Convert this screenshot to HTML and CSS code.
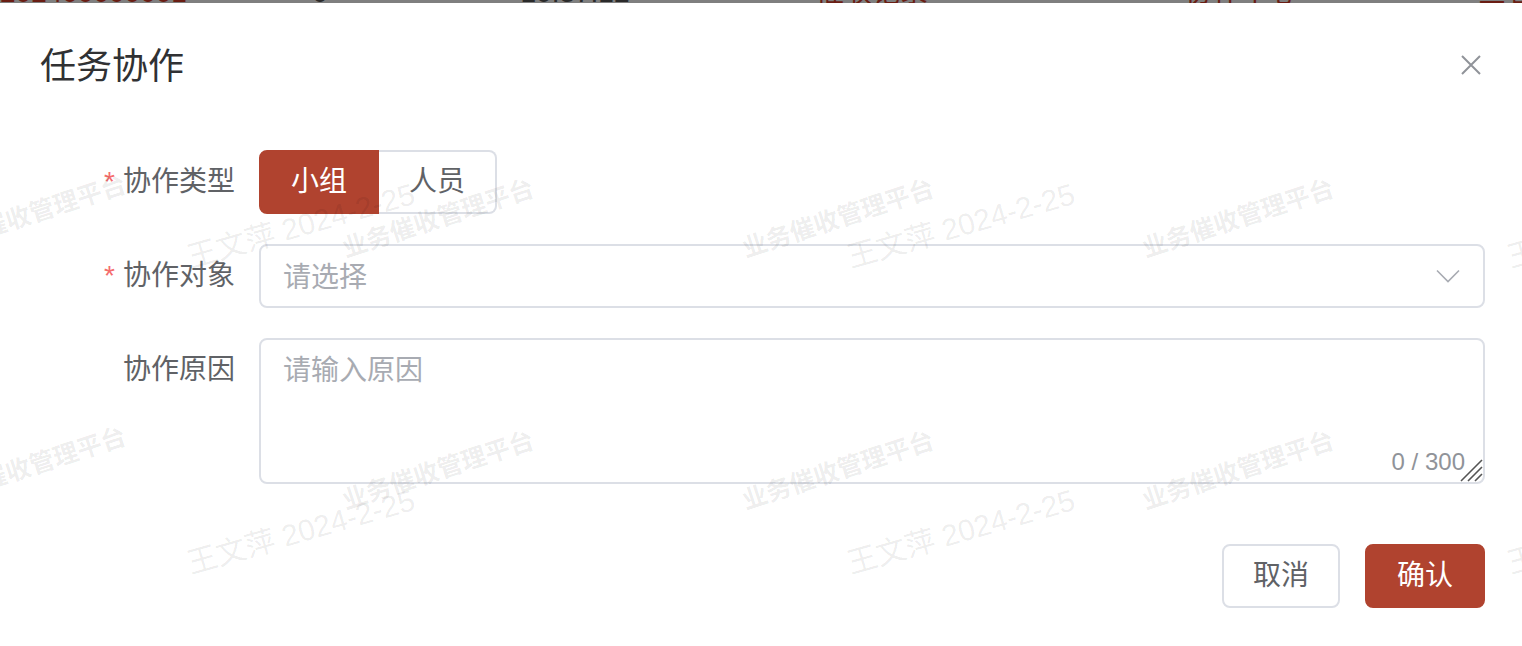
FILE: index.html
```html
<!DOCTYPE html>
<html lang="zh-CN">
<head>
<meta charset="utf-8">
<title>任务协作</title>
<link rel="stylesheet" href="styles.css">
</head>
<body>
<div class="page">
  <div class="backdrop-strip">
    <span class="cell c1 red">202400000001</span>
    <span class="cell c2 dark">0</span>
    <span class="cell c3 dark">10:37:12</span>
    <span class="cell c4 red">催收记录</span>
    <span class="cell c5 red">协作中心</span>
    <span class="cell c6 red">查看</span>
  </div>

  <div class="dialog">
    <header class="dlg-header">
      <h2 class="dlg-title">任务协作</h2>
      <button class="dlg-close" type="button" aria-label="关闭">
        <svg width="22" height="22" viewBox="0 0 22 22"><path d="M2 2 L20 20 M20 2 L2 20" stroke="#909399" stroke-width="2" fill="none"/></svg>
      </button>
    </header>

    <form class="dlg-body">
      <div class="form-item">
        <label class="form-label required">协作类型</label>
        <div class="form-content">
          <div class="radio-group">
            <span class="radio-btn active">小组</span>
            <span class="radio-btn">人员</span>
          </div>
        </div>
      </div>

      <div class="form-item">
        <label class="form-label required">协作对象</label>
        <div class="form-content">
          <div class="select">
            <span class="select-placeholder">请选择</span>
            <svg class="select-arrow" width="24" height="14" viewBox="0 0 24 14"><polyline points="1,1.5 12,12.5 23,1.5" fill="none" stroke="#a8abb2" stroke-width="1.6"/></svg>
          </div>
        </div>
      </div>

      <div class="form-item">
        <label class="form-label">协作原因</label>
        <div class="form-content">
          <div class="textarea-wrap">
            <textarea class="textarea" placeholder="请输入原因"></textarea>
            <span class="word-count">0 / 300</span>
            <svg class="resizer" width="26" height="26" viewBox="0 0 26 26"><path d="M25 4 L4 25 M25 11 L11 25 M25 18 L18 25" stroke="#555" stroke-width="1.6" fill="none"/></svg>
          </div>
        </div>
      </div>
    </form>

    <footer class="dlg-footer">
      <button type="button" class="btn btn-default">取消</button>
      <button type="button" class="btn btn-primary">确认</button>
    </footer>
  </div>

  <div class="watermark" aria-hidden="true">
    <span class="wm wm-name" style="left:301px;top:226px">王文萍 2024-2-25</span>
    <span class="wm wm-name" style="left:961px;top:226px">王文萍 2024-2-25</span>
    <span class="wm wm-name" style="left:1621px;top:226px">王文萍 2024-2-25</span>
    <span class="wm wm-name" style="left:301px;top:532px">王文萍 2024-2-25</span>
    <span class="wm wm-name" style="left:961px;top:532px">王文萍 2024-2-25</span>
    <span class="wm wm-name" style="left:1621px;top:532px">王文萍 2024-2-25</span>
    <span class="wm wm-sys" style="left:30px;top:214px">业务催收管理平台</span>
    <span class="wm wm-sys" style="left:438px;top:218px">业务催收管理平台</span>
    <span class="wm wm-sys" style="left:838px;top:218px">业务催收管理平台</span>
    <span class="wm wm-sys" style="left:1238px;top:218px">业务催收管理平台</span>
    <span class="wm wm-sys" style="left:30px;top:466px">业务催收管理平台</span>
    <span class="wm wm-sys" style="left:438px;top:470px">业务催收管理平台</span>
    <span class="wm wm-sys" style="left:838px;top:470px">业务催收管理平台</span>
    <span class="wm wm-sys" style="left:1238px;top:470px">业务催收管理平台</span>
  </div>
</div>
</body>
</html>
```

FILE: styles.css
```css
* { box-sizing: border-box; }

html, body {
  margin: 0;
  padding: 0;
  background: #ffffff;
}

body {
  font-family: "Liberation Sans", "Noto Sans CJK SC", sans-serif;
  color: #606266;
}

.page {
  position: relative;
  width: 1522px;
  height: 646px;
  overflow: hidden;
  background: #ffffff;
}

/* sliver of the dimmed table behind the dialog */
.backdrop-strip {
  display: flex;
  align-items: flex-end;
  height: 3px;
  overflow: hidden;
  background: #7f7f7f;
  font-size: 28px;
  line-height: 28px;
}
.cell {
  flex: none;
  margin-bottom: -4px;
  white-space: nowrap;
}
.cell.red { color: #6a1d13; }
.cell.dark { color: #2a2a2a; }
.c1 { width: 210px; text-align: right; padding-right: 90px; }
.c2 { width: 220px; text-align: center; }
.c3 { width: 290px; text-align: center; }
.c4 { width: 304px; text-align: center; }
.c5 { width: 434px; text-align: center; }
.c6 { width: 64px; padding-left: 20px; }

/* dialog */
.dialog {
  background: #ffffff;
  padding: 0 37px 0 40px;
}

.dlg-header {
  display: flex;
  align-items: center;
  justify-content: space-between;
  padding-top: 40px;
  height: 88px;
}
.dlg-title {
  margin: 0;
  font-size: 36px;
  line-height: 48px;
  font-weight: 400;
  color: #303133;
}
.dlg-close {
  display: flex;
  align-items: center;
  justify-content: center;
  width: 28px;
  height: 28px;
  padding: 0;
  margin-top: -4px;
  border: none;
  background: transparent;
}

.dlg-body {
  margin: 59px 0 0 0;
}

.form-item {
  display: flex;
  align-items: flex-start;
  margin-bottom: 30px;
}
.form-item:last-child { margin-bottom: 0; }

.form-label {
  flex: none;
  width: 219px;
  padding-right: 24px;
  text-align: right;
  font-size: 28px;
  line-height: 64px;
  color: #606266;
}
.form-label.required::before {
  content: "*";
  color: #f56c6c;
  margin-right: 8px;
}

.form-content {
  flex: 1;
  min-width: 0;
}

/* radio button group */
.radio-group {
  display: flex;
}
.radio-btn {
  height: 64px;
  line-height: 60px;
  font-size: 28px;
  padding: 0 30px;
  border: 2px solid #dcdfe6;
  color: #606266;
  background: #ffffff;
}
.radio-btn:first-child {
  border-radius: 8px 0 0 8px;
}
.radio-btn:last-child {
  border-left: none;
  border-radius: 0 8px 8px 0;
}
.radio-btn.active {
  background: #b0432f;
  border-color: #b0432f;
  color: #ffffff;
}

/* select */
.select {
  display: flex;
  align-items: center;
  justify-content: space-between;
  height: 64px;
  padding: 0 23px 0 22px;
  border: 2px solid #dcdfe6;
  border-radius: 8px;
  background: transparent;
}
.select-placeholder {
  font-size: 28px;
  line-height: 40px;
  margin-top: 3px;
  color: #a8abb2;
}
.select-arrow { display: block; }

/* textarea */
.textarea-wrap {
  position: relative;
}
.textarea {
  display: block;
  width: 100%;
  height: 146px;
  padding: 10px 22px;
  border: 2px solid #dcdfe6;
  border-radius: 8px;
  resize: none;
  outline: none;
  background: transparent;
  font-family: "Liberation Sans", "Noto Sans CJK SC", sans-serif;
  font-size: 28px;
  line-height: 42px;
  color: #606266;
}
.textarea::placeholder { color: #a8abb2; }
.word-count {
  position: absolute;
  right: 20px;
  bottom: 10px;
  font-size: 24px;
  line-height: 24px;
  color: #909399;
}
.resizer {
  position: absolute;
  right: 2px;
  bottom: 2px;
}

/* footer */
.dlg-footer {
  display: flex;
  justify-content: flex-end;
  gap: 25px;
  margin-top: 60px;
}
.btn {
  height: 64px;
  padding: 0 29px;
  border: 2px solid #dcdfe6;
  border-radius: 8px;
  font-family: "Liberation Sans", "Noto Sans CJK SC", sans-serif;
  font-size: 28px;
  line-height: 60px;
  background: #ffffff;
  color: #606266;
}
.btn-primary {
  padding: 0 30px;
  background: #b0432f;
  border-color: #b0432f;
  color: #ffffff;
}

/* watermark layer */
.watermark {
  position: absolute;
  inset: 0;
  pointer-events: none;
  overflow: hidden;
}
.wm {
  position: absolute;
  white-space: nowrap;
  transform: translate(-50%, -50%) rotate(-16deg);
  color: rgba(0, 0, 0, 0.08);
}
.wm-name {
  font-size: 30px;
  line-height: 34px;
}
.wm-sys {
  font-size: 25px;
  line-height: 30px;
  font-weight: 700;
  transform: translate(-50%, -50%) rotate(-18deg);
}
```
